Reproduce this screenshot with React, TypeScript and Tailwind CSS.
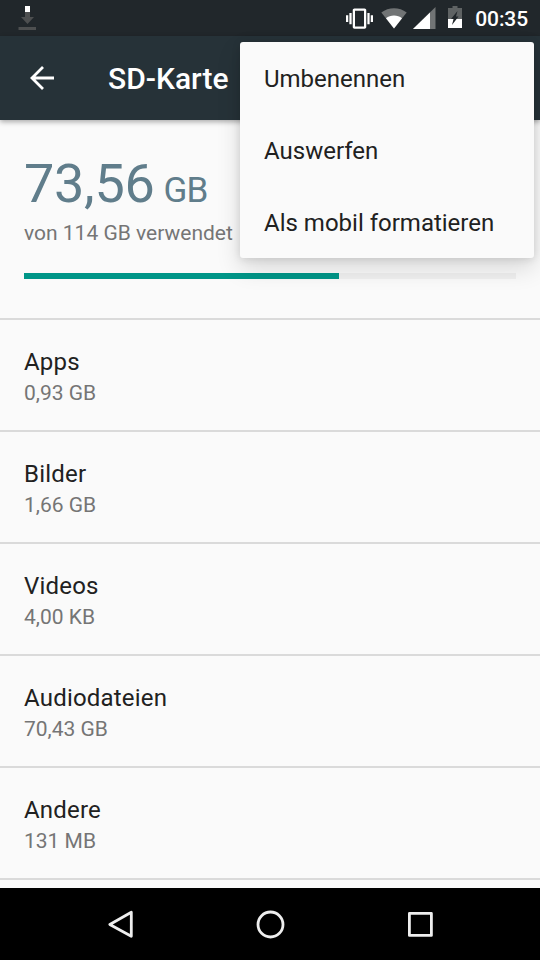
import type { ReactNode } from "react";

type StorageItem = {
  name: string;
  size: string;
};

const USED_PERCENT = 64.1;

const menuItems = ["Umbenennen", "Auswerfen", "Als mobil formatieren"];

const storageItems: StorageItem[] = [
  { name: "Apps", size: "0,93 GB" },
  { name: "Bilder", size: "1,66 GB" },
  { name: "Videos", size: "4,00 KB" },
  { name: "Audiodateien", size: "70,43 GB" },
  { name: "Andere", size: "131 MB" },
];

function DownloadIcon() {
  return (
    <svg width="18" height="24" viewBox="0 0 18 24" className="shrink-0">
      <path d="M7 6h5v5h4l-6.5 7L3 11h4z" fill="#4d4f50" />
      <path d="M7 0h5v6H7z" fill="#fff" />
      <path d="M.5 21H18v3H.5z" fill="#4d4f50" />
    </svg>
  );
}

function VibrateIcon() {
  return (
    <svg width="27" height="27" viewBox="0 0 24 24" fill="#fff">
      <path d="M0 15h2V9H0v6zm3 2h2V7H3v10zm19-8v6h2V9h-2zm-3 8h2V7h-2v10zM16.5 3h-9C6.67 3 6 3.67 6 4.5v15c0 .83.67 1.5 1.5 1.5h9c.83 0 1.5-.67 1.5-1.5v-15c0-.83-.67-1.5-1.5-1.5zM16 19H8V5h8v14z" />
    </svg>
  );
}

function WifiIcon() {
  return (
    <svg width="26" height="21" viewBox="0 0 26 21">
      <path d="M13 20.5 0.3 4.5C4 1.7 8.3 0.2 13 0.2S22 1.7 25.7 4.5z" fill="#717475" />
      <path d="M13 20.5 5 10.3C7.2 8.5 10 7.5 13 7.5s5.8 1 8 2.8z" fill="#fff" />
    </svg>
  );
}

function SignalIcon() {
  return (
    <svg width="23" height="22" viewBox="0 0 23 22">
      <path d="M0 22 22.5 0v22z" fill="#717475" />
      <path d="M0 22 17 5.5V22z" fill="#fff" />
    </svg>
  );
}

function BatteryIcon() {
  return (
    <svg width="14" height="22" viewBox="0 0 14 22">
      <path d="M4.5 0h5v2H14v20H0V2h4.500z" fill="#5f6364" />
      <path d="M0 13h14v9H0z" fill="#fff" />
      <path d="M9.500 5 3 13h2.500l-1.500 6 6.500-8.500H8z" fill="#21272b" />
    </svg>
  );
}

function StatusBar() {
  return (
    <div className="flex h-9 items-center bg-[#21272b] pr-3 pl-[18px]">
      <DownloadIcon />
      <div className="ml-auto flex items-center">
        <div className="mt-px">
          <VibrateIcon />
        </div>
        <div className="ml-2">
          <WifiIcon />
        </div>
        <div className="ml-1.5">
          <SignalIcon />
        </div>
        <div className="-mt-0.5 ml-3">
          <BatteryIcon />
        </div>
        <span className="mt-px ml-[13px] text-[21px] leading-6 font-medium tracking-[-0.1px] text-white">00:35</span>
      </div>
    </div>
  );
}

function AppBar() {
  return (
    <header className="relative flex h-[84px] items-center bg-[#263238] pl-[30px] shadow-[0_2px_5px_rgba(0,0,0,0.32)]">
      <svg width="24" height="24" viewBox="0 0 24 24" fill="none" stroke="#fff" strokeWidth="2.8">
        <path d="M24 12H2M13 1 2 12l11 11" />
      </svg>
      <h1 className="mt-0.5 ml-[54px] text-[30px] leading-9 font-medium text-white">SD-Karte</h1>
    </header>
  );
}

function Summary() {
  return (
    <section className="h-[198px] px-6 pt-8">
      <p className="flex h-[63px] items-baseline text-[#607d8b]">
        <span className="text-[54px] leading-[63px] tracking-[-0.3px]">73,56</span>
        <span className="ml-[9px] text-[35px] leading-[42px] tracking-[-0.8px]">GB</span>
      </p>
      <p className="mt-1.5 text-[21px] leading-[25px] text-[#757575]">von 114 GB verwendet</p>
      <div className="mt-[27px] h-1.5 bg-[#f0f0f0]">
        <div className="h-full bg-[#009688]" style={{ width: `${USED_PERCENT}%` }} />
      </div>
    </section>
  );
}

function StorageRow({ name, size }: StorageItem) {
  return (
    <li className="h-28 border-t-2 border-[#dadada] px-6 pt-7">
      <p className="text-[24px] leading-7 tracking-[0.2px] text-[#212121]">{name}</p>
      <p className="mt-[5px] text-[21px] leading-[25px] text-[#757575]">{size}</p>
    </li>
  );
}

// Drawn above the app bar and the progress bar, so its shadow tints both
function OverflowMenu() {
  return (
    <ul className="absolute top-[42px] left-60 w-[294px] rounded-[3px] bg-[#fafafa] shadow-[0_10px_24px_rgba(0,0,0,0.14),0_1px_8px_rgba(0,0,0,0.12)]">
      {menuItems.map((item) => (
        <li key={item} className="flex h-[72px] items-center px-6 pt-0.5 text-[24px] leading-7 text-[#212121]">
          {item}
        </li>
      ))}
    </ul>
  );
}

function NavIcon({ children }: { children: ReactNode }) {
  return (
    <svg width="30" height="30" viewBox="0 0 30 30" fill="none" stroke="#eee" strokeWidth="2.8" strokeLinejoin="round">
      {children}
    </svg>
  );
}

function NavigationBar() {
  return (
    <nav className="flex h-[72px] shrink-0 items-center justify-center gap-[120px] bg-black">
      <NavIcon>
        <path d="M4.8 15.5 26.3 3.3v24z" />
      </NavIcon>
      <NavIcon>
        <circle cx="15.5" cy="15.5" r="12.5" />
      </NavIcon>
      <NavIcon>
        <path d="M4.4 4.4h22v22h-22z" />
      </NavIcon>
    </nav>
  );
}

export default function App() {
  return (
    <div className="relative flex h-[960px] w-[540px] flex-col overflow-hidden bg-[#fafafa] font-[Roboto,sans-serif]">
      <StatusBar />
      <AppBar />
      <main className="flex-1 overflow-hidden">
        <Summary />
        <ul className="border-b-2 border-[#dadada]">
          {storageItems.map((item) => (
            <StorageRow key={item.name} {...item} />
          ))}
        </ul>
      </main>
      <NavigationBar />
      <OverflowMenu />
    </div>
  );
}
